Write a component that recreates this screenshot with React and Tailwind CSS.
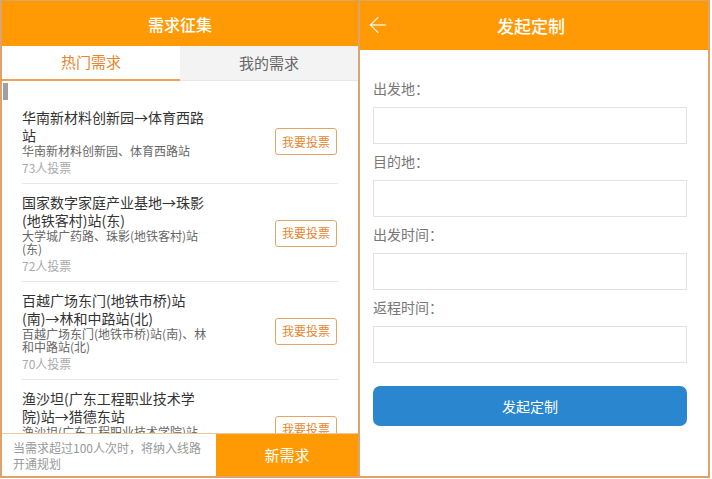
import { ArrowLeft } from 'lucide-react'

const font = { fontFamily: '"Noto Sans CJK SC", "Noto Sans", sans-serif' }

const demands = [
  {
    title: ['华南新材料创新园→体育西路', '站'],
    sub: ['华南新材料创新园、体育西路站'],
    votes: 73,
  },
  {
    title: ['国家数字家庭产业基地→珠影', '(地铁客村)站(东)'],
    sub: ['大学城广药路、珠影(地铁客村)站', '(东)'],
    votes: 72,
  },
  {
    title: ['百越广场东门(地铁市桥)站', '(南)→林和中路站(北)'],
    sub: ['百越广场东门(地铁市桥)站(南)、林', '和中路站(北)'],
    votes: 70,
  },
  {
    title: ['渔沙坦(广东工程职业技术学', '院)站→猎德东站'],
    sub: ['渔沙坦(广东工程职业技术学院)站、', '猎德东站'],
    votes: 68,
  },
]

function DemandItem({ item, last }) {
  return (
    <div className={`mx-[20px] flex items-center justify-between pt-[9px] pb-[7px] ${last ? '' : 'border-b border-[#e6e6e6]'}`}>
      <div className="w-[200px]">
        <div className="text-[14px] leading-[18px] text-[#333]">
          {item.title.map((t) => (
            <div key={t} className="whitespace-nowrap">{t}</div>
          ))}
        </div>
        <div className="text-[12px] leading-[13.5px] text-[#666]">
          {item.sub.map((t) => (
            <div key={t} className="whitespace-nowrap">{t}</div>
          ))}
        </div>
        <div className="mt-[2px] text-[12px] leading-[16px] text-[#aaa]">{item.votes}人投票</div>
      </div>
      <button className="mr-[1px] h-[27px] w-[62px] rounded-[3px] border border-[#e3a565] text-[12px] text-[#e5862e]">
        我要投票
      </button>
    </div>
  )
}

function DemandPhone() {
  return (
    <div className="flex h-[478px] w-[360px] flex-col overflow-hidden border-2 border-t border-[#dca46c]">
      <div className="flex h-[45px] shrink-0 items-center justify-center bg-[#ff9a05] text-[16px] font-medium text-white">
        需求征集
      </div>
      <div className="flex h-[35px] shrink-0 text-[15px]">
        <div className="flex flex-1 items-center justify-center border-b-2 border-[#f0a050] bg-white text-[#e5862e]">
          热门需求
        </div>
        <div className="flex flex-1 items-center justify-center border-b border-[#e6e6e6] bg-[#f3f3f3] text-[#666]">
          我的需求
        </div>
      </div>
      <div className="relative flex-1 overflow-hidden bg-white pt-[18px]">
        <div className="absolute left-[1px] top-[2px] h-[17px] w-[5px] bg-[#a0a0a0]" />
        {demands.map((d, i) => (
          <DemandItem key={i} item={d} last={i === demands.length - 1} />
        ))}
      </div>
      <div className="flex h-[43px] shrink-0 border-t border-[#e8c9a0]">
        <div className="w-[214px] bg-white pl-[11px] pt-[6px] text-[12px] leading-[16px] text-[#999]">
          <div className="whitespace-nowrap">当需求超过100人次时，将纳入线路</div>
          <div>开通规划</div>
        </div>
        <div className="flex flex-1 items-center justify-center bg-[#ff9a05] text-[15px] text-white">新需求</div>
      </div>
    </div>
  )
}

function Field({ label }) {
  return (
    <div className="pb-[7px]">
      <div className="mb-[9px] text-[14px] leading-[20px] text-[#777]">{label}</div>
      <div className="h-[37px] border border-[#e2e2e2] bg-white" />
    </div>
  )
}

function CustomPhone() {
  return (
    <div className="flex h-[478px] w-[350px] flex-col border-r-2 border-b-2 border-t border-[#dca46c]">
      <div className="relative flex h-[49px] shrink-0 items-center justify-center bg-[#ff9a05] text-[17px] font-medium text-white">
        <ArrowLeft className="absolute left-[5px] top-[11px] text-white/80" size={26} strokeWidth={1.2} />
        <span className="-ml-[6px]">发起定制</span>
      </div>
      <div className="flex-1 bg-white pl-[13px] pr-[21px] pt-[28px]">
        <Field label="出发地：" />
        <Field label="目的地：" />
        <Field label="出发时间：" />
        <Field label="返程时间：" />
        <button className="mt-[16px] flex h-[40px] w-full items-center justify-center rounded-[7px] bg-[#2a86cf] text-[14px] text-white">
          发起定制
        </button>
      </div>
    </div>
  )
}

export default function App() {
  return (
    <div className="flex h-[479px] w-[712px] bg-white" style={font}>
      <DemandPhone />
      <CustomPhone />
    </div>
  )
}
